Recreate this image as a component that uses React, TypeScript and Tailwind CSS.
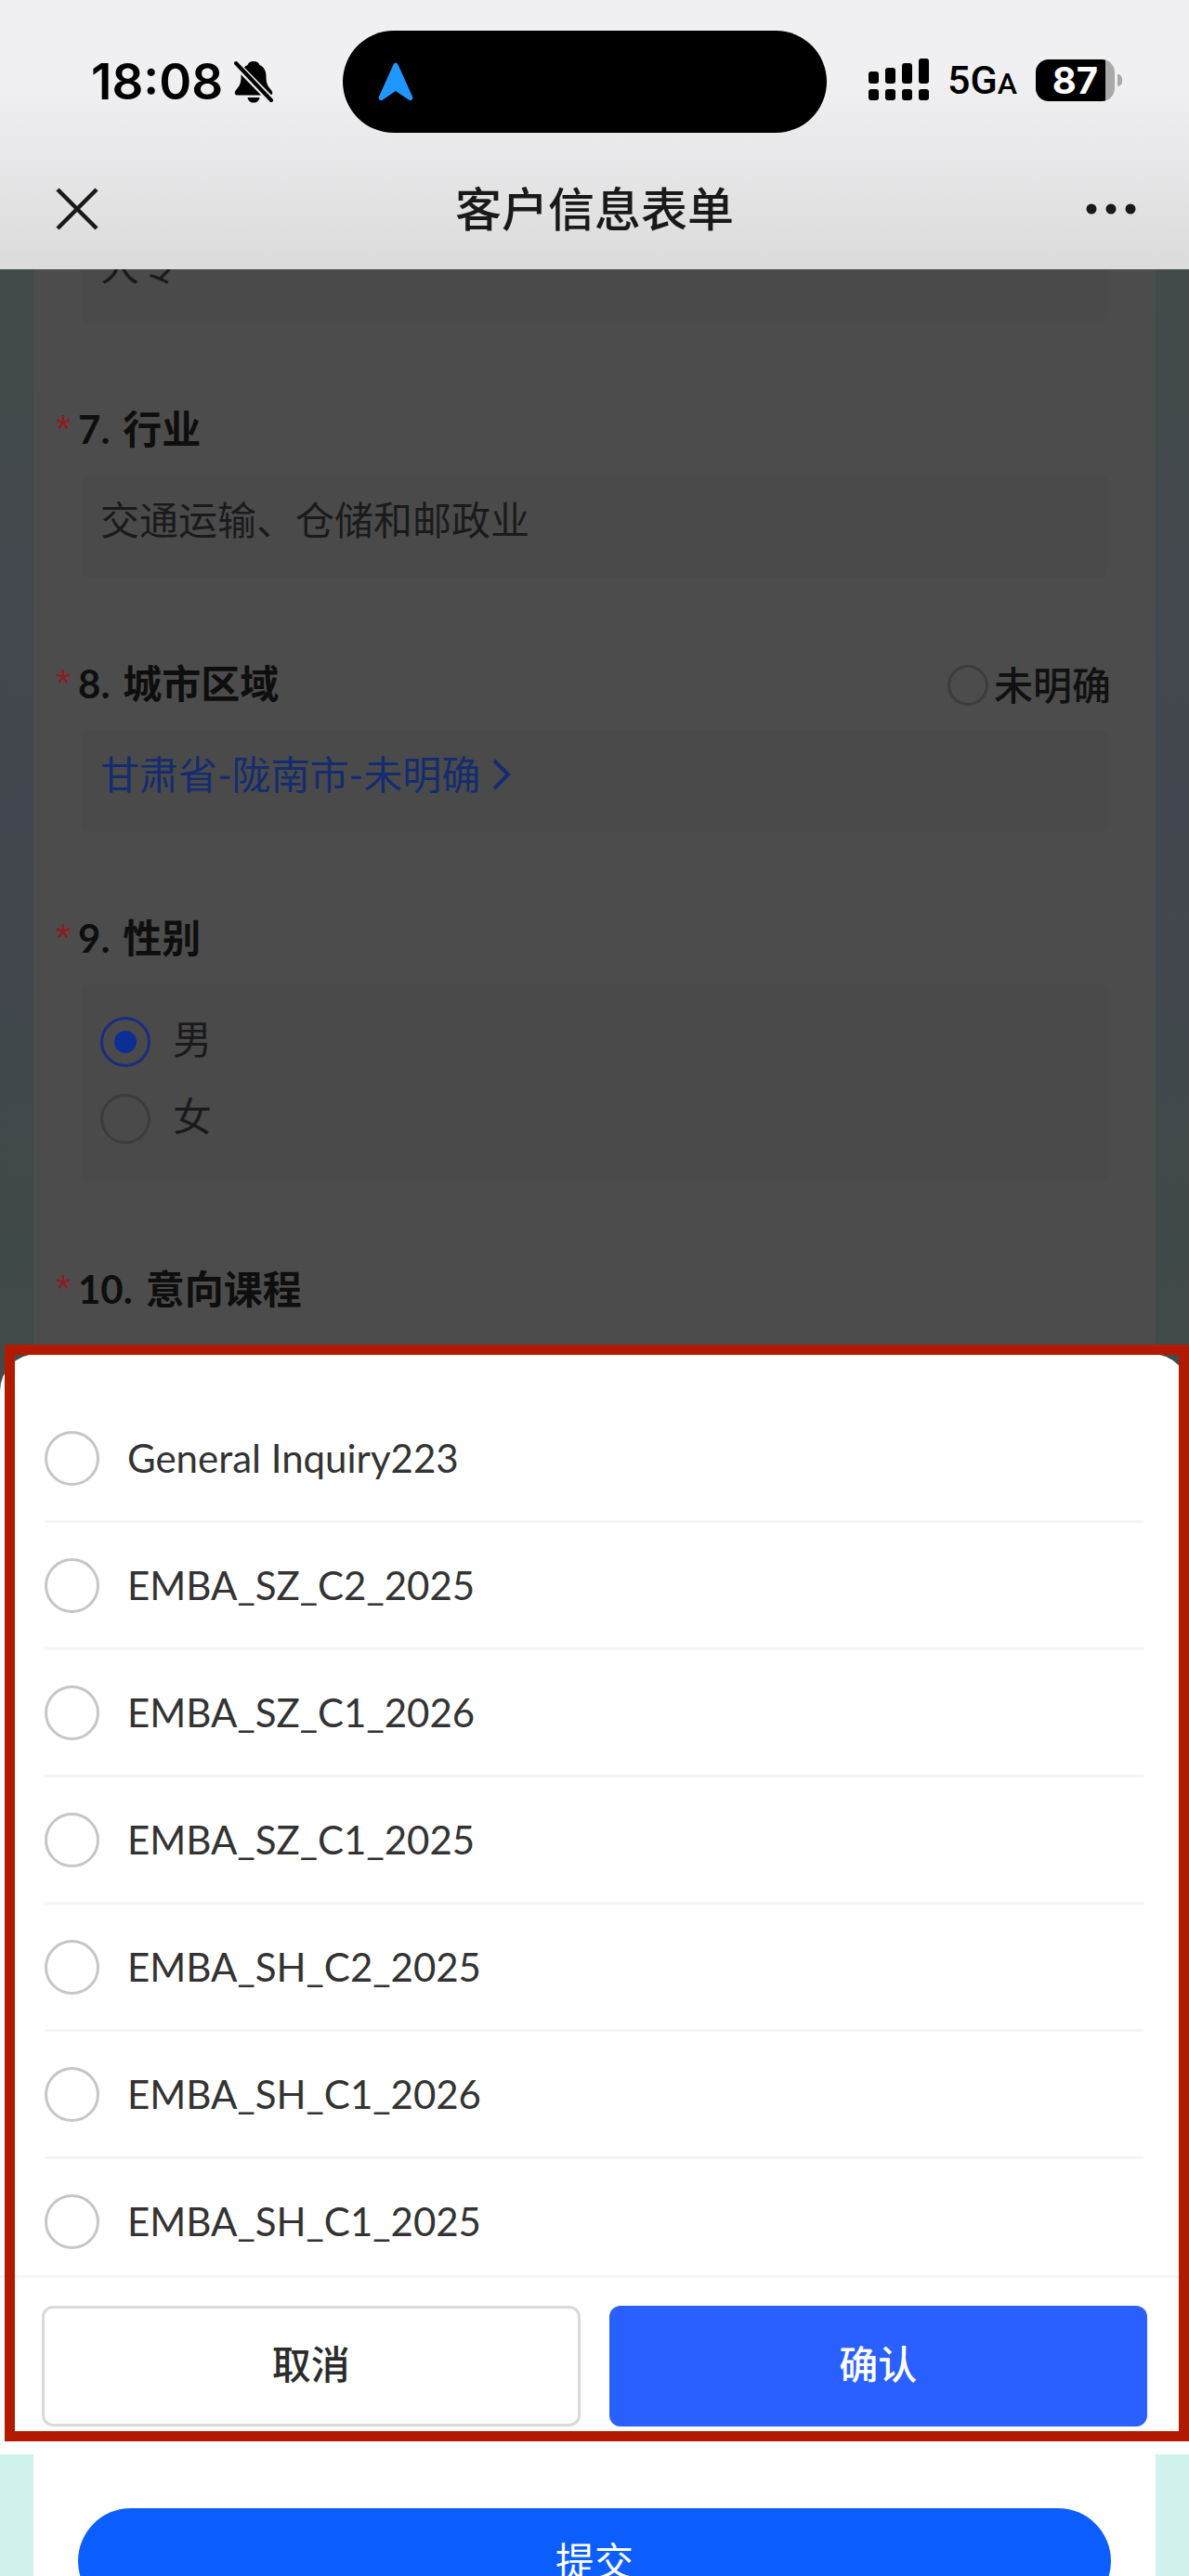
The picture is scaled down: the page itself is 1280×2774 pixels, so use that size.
import { useState } from 'react';
import type { ReactNode } from 'react';

const courses = [
  'General Inquiry223',
  'EMBA_SZ_C2_2025',
  'EMBA_SZ_C1_2026',
  'EMBA_SZ_C1_2025',
  'EMBA_SH_C2_2025',
  'EMBA_SH_C1_2026',
  'EMBA_SH_C1_2025',
];

function StatusBar() {
  return (
    <div className="grid grid-cols-[369fr_521fr_390fr] items-center pt-[33px] font-['Inter',sans-serif] text-black">
      <div className="flex items-center gap-3 pl-[98px]">
        <span className="text-[53px] leading-[60px] font-semibold">18:08</span>
        <svg viewBox="0 0 42 46" className="h-[46px] w-[42px] shrink-0" aria-label="静音">
          <path
            d="M21 1c-3.500 0-5.500 1.500-6.500 4C9 7.500 7.500 12 7.500 18c0 7-2 10-5.500 14-2.500 3-1 5.500 2 5.500h34c3 0 4.500-2.500 2-5.500-3.500-4-5.500-7-5.500-14 0-6-1.500-10.500-7-13-1-2.500-3-4-6.500-4zM14.500 40h13c-.5 3.500-3 5.500-6.500 5.500S15 43.500 14.500 40z"
            fill="currentColor"
          />
          <path d="M-2 0l44 45" stroke="#ededee" strokeWidth="8" />
          <path d="M2 3l38 40" stroke="currentColor" strokeWidth="4" strokeLinecap="round" />
        </svg>
      </div>
      <div className="flex h-[110px] items-center rounded-full bg-black pl-[38px]">
        <svg viewBox="0 0 38 42" className="h-[42px] w-[38px]" aria-hidden="true">
          <path
            d="M16.500 2.500c1-2.500 4-2.500 5 0L37 37c1.200 3-1.500 5-4 3.500L19 31 5 40.500C2.500 42-.2 40 1 37z"
            fill="#2096ff"
          />
        </svg>
      </div>
      <div className="flex items-center pb-1 pl-[45px]">
        <svg viewBox="0 0 65 46" className="h-[46px] w-[65px]" aria-label="信号">
          <rect x="0" y="14" width="11" height="13" rx="3" />
          <rect x="18" y="10" width="11" height="17" rx="3" />
          <rect x="36" y="5" width="11" height="22" rx="3" />
          <rect x="54" y="0" width="11" height="27" rx="3" />
          <rect x="0" y="33" width="11" height="12" rx="3" />
          <rect x="18" y="33" width="11" height="12" rx="3" />
          <rect x="36" y="33" width="11" height="12" rx="3" />
          <rect x="54" y="33" width="11" height="12" rx="3" />
        </svg>
        <span className="ml-5 pt-1 font-['Roboto',sans-serif] text-[43px] leading-[46px] font-medium">
          5G<span className="text-[32px]">A</span>
        </span>
        <div className="ml-5 flex items-center gap-[3px]">
          <div className="flex h-[45px] w-[85px] items-center justify-center rounded-[14px] bg-linear-to-r from-black from-88% to-[#a9a9a9] to-88% text-[40px] leading-[45px] font-bold text-white">
            87
          </div>
          <div className="h-[13px] w-[5px] rounded-r-full bg-[#a9a9a9]" />
        </div>
      </div>
    </div>
  );
}

function NavBar() {
  return (
    <div className="flex items-center justify-between px-[57px] pt-[50px] pb-[33px] text-[#191919]">
      <button type="button" aria-label="关闭" className="flex w-[100px]">
        <svg viewBox="0 0 52 52" className="size-[52px]" fill="none" stroke="currentColor" strokeWidth="4.500">
          <path d="M5 5l42 42M47 5L5 47" />
        </svg>
      </button>
      <h1 className="text-[50px] leading-[64px] font-medium">客户信息表单</h1>
      <button type="button" aria-label="更多" className="flex w-[100px] justify-end">
        <svg viewBox="0 0 54 12" className="h-3 w-[54px]" fill="currentColor">
          <circle cx="6" cy="6" r="5.500" />
          <circle cx="27" cy="6" r="5.500" />
          <circle cx="48" cy="6" r="5.500" />
        </svg>
      </button>
    </div>
  );
}

interface QuestionProps {
  no: number;
  title: string;
  extra?: ReactNode;
  children?: ReactNode;
}

function Question({ no, title, extra, children }: QuestionProps) {
  return (
    <section className="pt-[84px]">
      <div className="flex h-[60px] items-center justify-between pr-12 pl-6">
        <h2 className="flex items-center text-[42px] leading-[60px] font-bold text-[#0e0e0e]">
          <span className="w-6 font-['Liberation_Sans',sans-serif] font-normal text-[#8c1c22]">*</span>
          <span className="mr-[14px]">{no}.</span>
          {title}
        </h2>
        {extra}
      </div>
      {children && <div className="mx-[52px] mt-5 rounded-lg bg-[#4a4a4a] pl-5">{children}</div>}
    </section>
  );
}

const darkRadio =
  'shrink-0 appearance-none rounded-full border-3 border-[#3c3c3c] bg-transparent checked:border-[#1a2c80]';

function DimmedForm() {
  const [gender, setGender] = useState('男');

  return (
    <main className="overflow-hidden bg-linear-to-b from-[#424a4a] via-[#42474f] to-[#404a48] px-9">
      <div className="bg-[#4c4c4c] pb-10 text-[42px] text-[#1a1a1d]">
        {/* Scrolled part of question 6 */}
        <div className="-mt-[52px] mx-[52px] h-[110px] rounded-lg bg-[#4a4a4a] pl-5 leading-[96px]">大专</div>

        <Question no={7} title="行业">
          <p className="h-[110px] leading-[96px]">交通运输、仓储和邮政业</p>
        </Question>

        <Question
          no={8}
          title="城市区域"
          extra={
            <label className="flex items-center gap-[6px] pt-1 font-medium text-[#111111]">
              <input type="radio" name="unknown" className={`size-[44px] ${darkRadio}`} />
              未明确
            </label>
          }
        >
          <a href="#region" className="flex h-[110px] items-start gap-3 leading-[96px] text-[#142c70]">
            甘肃省-陇南市-未明确
            <svg viewBox="0 0 22 34" className="mt-[31px] h-[34px] w-[22px]" fill="none" stroke="currentColor" strokeWidth="4">
              <path d="M3 2l15 15L3 32" />
            </svg>
          </a>
        </Question>

        <Question no={9} title="性别">
          <div className="flex h-[214px] flex-col pt-5">
            {['男', '女'].map((g) => (
              <label key={g} className="flex h-[83px] items-center gap-6">
                <span className="relative flex">
                  <input
                    type="radio"
                    name="gender"
                    checked={gender === g}
                    onChange={() => setGender(g)}
                    className={`peer size-[54px] ${darkRadio}`}
                  />
                  <span className="pointer-events-none absolute inset-[15px] hidden rounded-full bg-[#0b2f94] peer-checked:block" />
                </span>
                <span className="pb-1">{g}</span>
              </label>
            ))}
          </div>
        </Question>

        <Question no={10} title="意向课程" />
      </div>
    </main>
  );
}

function CourseSheet() {
  const [selected, setSelected] = useState('');

  return (
    <div className="relative bg-[#444a4b]">
      <div role="dialog" aria-label="意向课程" className="rounded-t-[40px] bg-white pt-[45px]">
        <div className="h-[947px] overflow-hidden pr-[49px] pl-12">
          {courses.map((course) => (
            <label
              key={course}
              className="flex h-[137px] items-center gap-[30px] border-b-3 border-[#f5f5f5] text-[42px] text-[#333333]"
            >
              <input
                type="radio"
                name="course"
                checked={selected === course}
                onChange={() => setSelected(course)}
                className="size-[59px] shrink-0 appearance-none rounded-full border-3 border-[#c6c6c6] checked:border-[18px] checked:border-[#2a60ff]"
              />
              {course}
            </label>
          ))}
        </div>
        <div className="grid grid-cols-2 gap-[31px] border-t-3 border-[#f5f5f5] px-[45px] pt-[30px] pb-[30px] text-[42px] font-medium">
          <button type="button" className="h-[130px] rounded-xl border-3 border-[#d9d9d9] pb-1 text-[#2c2c2c]">
            取消
          </button>
          <button type="button" className="h-[130px] rounded-xl bg-[#2a60ff] pb-1 text-white">
            确认
          </button>
        </div>
      </div>
      {/* Highlight frame around the sheet */}
      <div className="pointer-events-none absolute -top-[10px] right-0 bottom-[14px] left-[5px] border-[11px] border-[#b21a00]" />
    </div>
  );
}

export default function App() {
  return (
    <div className="flex h-screen flex-col overflow-hidden bg-[#cff2ec] font-['Lato','Noto_Sans_CJK_SC',sans-serif]">
      <header className="shrink-0 bg-linear-to-b from-[#f0f0f2] from-30% to-[#dbdbdc]">
        <StatusBar />
        <NavBar />
      </header>
      <div className="shrink-0">
        <DimmedForm />
        <CourseSheet />
      </div>
      <footer className="mx-9 grow bg-white px-12 pt-[58px]">
        <button type="button" className="h-[114px] w-full rounded-full bg-[#0c5eff] text-[42px] text-white">
          提交
        </button>
      </footer>
    </div>
  );
}
